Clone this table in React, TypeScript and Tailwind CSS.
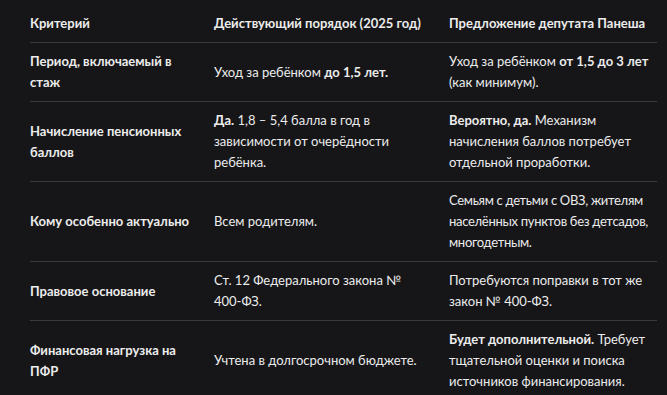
const rows: { k: string; a: React.ReactNode; b: React.ReactNode }[] = [
  {
    k: "Период, включаемый в стаж",
    a: (
      <>
        Уход за ребёнком <b className="font-bold">до 1,5 лет.</b>
      </>
    ),
    b: (
      <>
        Уход за ребёнком <b className="font-bold">от 1,5 до 3 лет</b> (как минимум).
      </>
    ),
  },
  {
    k: "Начисление пенсионных баллов",
    a: (
      <>
        <b className="font-bold">Да.</b> 1,8 – 5,4 балла в год в зависимости от очерёдности ребёнка.
      </>
    ),
    b: (
      <>
        <b className="font-bold">Вероятно, да.</b> Механизм начисления баллов потребует отдельной проработки.
      </>
    ),
  },
  {
    k: "Кому особенно актуально",
    a: "Всем родителям.",
    b: (
      <span className="tracking-[-0.3px]">
        Семьям с детьми с ОВЗ, жителям населённых пунктов без детсадов, многодетным.
      </span>
    ),
  },
  {
    k: "Правовое основание",
    a: (
      <>
        Ст. 12 Федерального закона № <span className="whitespace-nowrap">400-ФЗ.</span>
      </>
    ),
    b: (
      <>
        Потребуются поправки в тот же закон № <span className="whitespace-nowrap">400-ФЗ.</span>
      </>
    ),
  },
  {
    k: "Финансовая нагрузка на ПФР",
    a: "Учтена в долгосрочном бюджете.",
    b: (
      <>
        <b className="font-bold">Будет дополнительной.</b> Требует тщательной оценки и поиска источников финансирования.
      </>
    ),
  },
];

export default function App() {
  return (
    <div
      className="min-h-screen bg-[#161618] px-[30px] pt-[5px] text-[13px] leading-[21px] text-[#ececec]"
      style={{ fontFamily: 'Lato, "Noto Sans", sans-serif' }}
    >
      <div className="grid w-[627px] grid-cols-[184px_235px_208px]">
        <div className="border-b border-[#3a3a3c] py-2 pr-3 font-bold">Критерий</div>
        <div className="border-b border-[#3a3a3c] py-2 pr-3 font-bold">Действующий порядок (2025 год)</div>
        <div className="border-b border-[#3a3a3c] py-2 font-bold">Предложение депутата Панеша</div>
        {rows.map((r, i) => (
          <div key={i} className="contents">
            <div className="flex items-center border-b border-[#3a3a3c] py-2 pr-3 font-bold">{r.k}</div>
            <div className="flex items-center border-b border-[#3a3a3c] py-2 pr-3">
              <span>{r.a}</span>
            </div>
            <div className="flex items-center border-b border-[#3a3a3c] py-2">
              <span>{r.b}</span>
            </div>
          </div>
        ))}
      </div>
    </div>
  );
}
